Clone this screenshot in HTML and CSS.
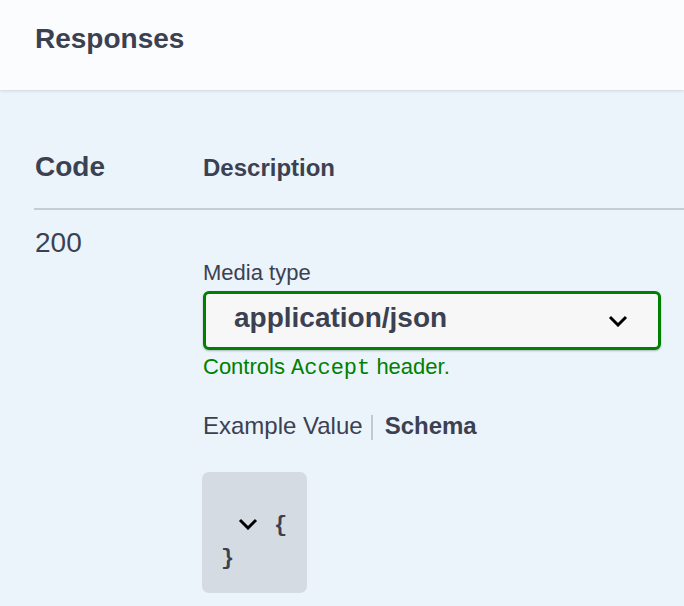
FILE: index.html
```html
<!DOCTYPE html>
<html lang="en">
<head>
<meta charset="utf-8">
<title>Responses</title>
<link rel="stylesheet" href="styles.css">
</head>
<body>
<div class="responses-wrapper">
  <div class="opblock-section-header">
    <h4 class="opblock-title">Responses</h4>
  </div>
  <div class="responses-inner">
    <div class="responses-table">
      <div class="table-head">
        <div class="col-status col-header">Code</div>
        <div class="col-description col-header">Description</div>
      </div>
      <div class="table-row">
        <div class="col-status">200</div>
        <div class="col-description">
          <div class="media-title">Media type</div>
          <div class="media-select" role="listbox" aria-label="Media type">
            <span class="media-select__value">application/json</span>
            <svg class="media-select__arrow" width="20" height="12" viewBox="0 0 20 12" aria-hidden="true">
              <polyline points="2,2 10,10 18,2" fill="none" stroke="#000" stroke-width="3"/>
            </svg>
          </div>
          <div class="accept-message">Controls <code>Accept</code> header.</div>
          <div class="tab-bar">
            <span class="tab-item">Example Value</span>
            <span class="tab-sep"></span>
            <span class="tab-item tab-item--active">Schema</span>
          </div>
          <div class="model-box">
            <div class="model-line">
              <svg class="model-toggle" width="20" height="12" viewBox="0 0 20 12" aria-hidden="true">
                <polyline points="2,2 10,10 18,2" fill="none" stroke="#000" stroke-width="3"/>
              </svg><span class="brace">{</span>
            </div>
            <div class="model-line model-line--close"><span class="brace">}</span></div>
          </div>
        </div>
      </div>
    </div>
  </div>
</div>
</body>
</html>
```

FILE: styles.css
```css
* {
  box-sizing: border-box;
}

html, body {
  margin: 0;
  padding: 0;
}

body {
  background: #ebf3fb;
  font-family: "Liberation Sans", Arial, sans-serif;
  color: #3b4151;
  overflow: hidden;
}

.responses-wrapper {
  min-height: 606px;
}

.opblock-section-header {
  height: 90px;
  background: #fbfcfe;
  box-shadow: 0 1px 3px rgba(0, 0, 0, 0.12);
  padding: 25px 0 0 35px;
  position: relative;
}

.opblock-title {
  margin: 0;
  font-size: 28px;
  line-height: 28px;
  font-weight: 700;
}

.responses-inner {
  padding: 57px 0 0 34px;
}

.table-head,
.table-row {
  display: grid;
  grid-template-columns: 169px 1fr;
}

.table-head {
  align-items: baseline;
  padding-bottom: 20px;
  border-bottom: 2px solid #c6ccd6;
}

.col-header {
  font-weight: 700;
}

.col-status {
  font-size: 28px;
  line-height: 40px;
  padding-left: 1px;
}

.table-head .col-description {
  font-size: 24px;
  line-height: 40px;
}

.table-row {
  padding-top: 13px;
  align-items: start;
}

.table-row .col-description {
  padding-top: 37px;
}

.media-title {
  font-size: 22px;
  line-height: 26px;
}

.media-select {
  margin-top: 5px;
  width: 458px;
  height: 59px;
  background: #f7f7f7;
  border: 3px solid #008000;
  border-radius: 6px;
  box-shadow: 0 1px 2px rgba(0, 0, 0, 0.25);
  display: flex;
  align-items: center;
  justify-content: space-between;
  padding: 0 30px 0 28px;
}

.media-select__value {
  font-size: 28px;
  line-height: 28px;
  font-weight: 700;
  margin-bottom: 6px;
}

.media-select__arrow {
  display: block;
  flex: none;
}

.accept-message {
  margin-top: 4px;
  font-size: 22px;
  line-height: 26px;
  color: #008000;
}

.accept-message code {
  font-family: "Liberation Mono", "Courier New", monospace;
  font-size: 22px;
}

.tab-bar {
  margin-top: 30px;
  display: flex;
  align-items: flex-start;
  height: 28px;
}

.tab-item {
  font-size: 24px;
  line-height: 28px;
}

.tab-item--active {
  font-weight: 700;
}

.tab-sep {
  width: 2px;
  height: 25px;
  margin: 3px 12px 0 8px;
  background: #c3c9d1;
}

.model-box {
  margin-top: 32px;
  margin-left: -1px;
  width: 105px;
  height: 121px;
  background: #d5dbe2;
  border-radius: 7px;
  padding: 37px 0 0 19px;
  font-family: "Liberation Mono", "Courier New", monospace;
  font-weight: 700;
  font-size: 22px;
  line-height: 33px;
  color: #3b4151;
}

.model-line {
  height: 33px;
  display: flex;
  align-items: center;
}

.model-toggle {
  display: block;
  margin: 0 16px 0 17px;
  position: relative;
  top: -2px;
}
```
